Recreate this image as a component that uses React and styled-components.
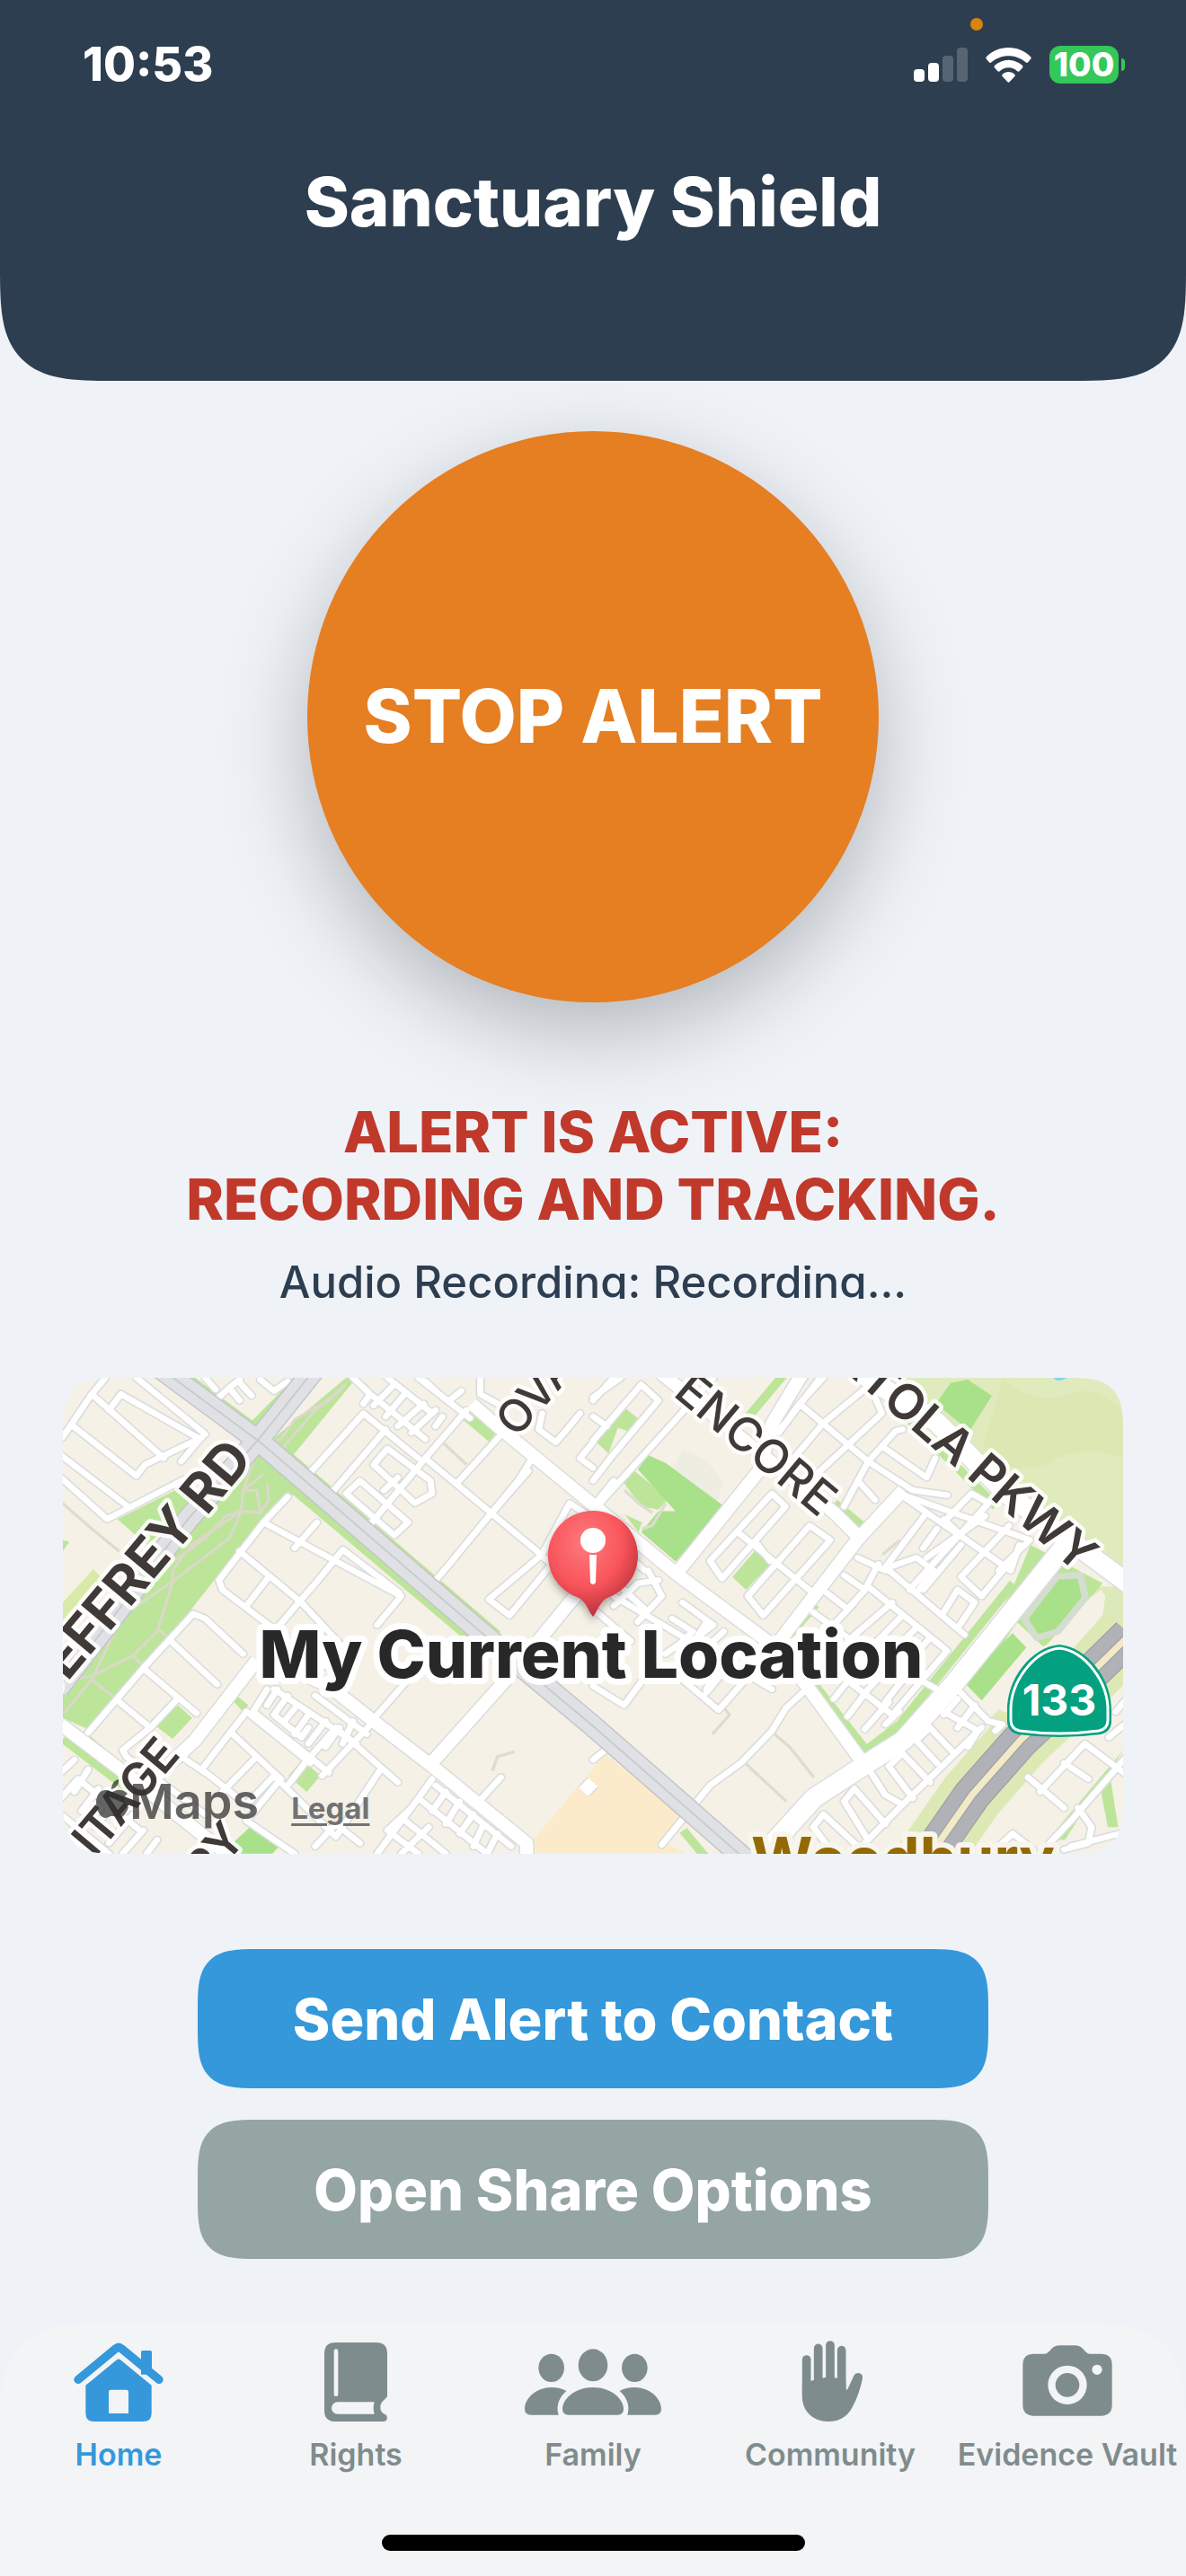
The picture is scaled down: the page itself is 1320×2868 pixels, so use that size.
import { useState } from "react"
import styled, { createGlobalStyle, css } from "styled-components"

const navy = "#2d3e50"
const page = "#eff3f8"
const bar = "#f3f4f6"
const blue = "#3498db"
const gray = "#95a5a4"
const muted = "#7f8c8d"

const GlobalStyle = createGlobalStyle`
    * {
        box-sizing: border-box;
    }
    body {
        margin: 0;
        background-color: ${page};
        font-family: Inter, "Liberation Sans", sans-serif;
    }
`

// smooth corners where the browser knows them, plain round ones elsewhere
const smooth = (top, bottom, round, soft) => css`
    border-radius: ${top * round}px ${top * round}px ${bottom * round}px ${bottom * round}px;

    @supports (corner-shape: squircle) {
        border-radius: ${top * soft}px ${top * soft}px ${bottom * soft}px ${bottom * soft}px;
        corner-shape: superellipse(1.7);
    }
`

const Screen = styled.div`
    min-height: 100vh;
    display: flex;
    flex-direction: column;
`
const Header = styled.header`
    background-color: ${navy};
    color: white;
    padding: 20px 0 152px;
    ${smooth(0, 1, 90, 126)}
`
const PrivacyRow = styled.div`
    height: 14px;
    padding-right: 226px;
    display: flex;
    justify-content: flex-end;
`
const PrivacyDot = styled.span`
    width: 14px;
    height: 14px;
    border-radius: 50%;
    background-color: #d6850e;
`
const StatusRow = styled.div`
    height: 76px;
    padding: 0 68px 0 92px;
    display: flex;
    justify-content: space-between;
    align-items: center;
`
const Time = styled.time`
    font-size: 52px;
    line-height: 60px;
    font-weight: 800;
`
const StatusIcons = styled.div`
    display: flex;
    align-items: center;
    gap: 20px;
`
const Battery = styled.span`
    display: flex;
    align-items: center;
    gap: 3px;
`
const BatteryBody = styled.span`
    width: 77px;
    height: 42px;
    border-radius: 12px;
    background-color: #34c759;
    font-size: 37px;
    line-height: 42px;
    font-weight: 800;
    text-align: center;
`
const BatteryNub = styled.span`
    width: 4px;
    height: 14px;
    border-radius: 0 8px 8px 0;
    background-color: #34c759;
`
const Title = styled.h1`
    margin: 66px 0 0;
    font-size: 76px;
    line-height: 96px;
    font-weight: 800;
    text-align: center;
`
const Main = styled.main`
    flex: 1;
    padding: 56px 70px 70px;
    display: flex;
    flex-direction: column;
    align-items: center;
`
const AlertButton = styled.button`
    width: 636px;
    max-width: 100%;
    aspect-ratio: 1;
    border: none;
    border-radius: 50%;
    background-color: #e67e22;
    box-shadow: 0 32px 96px rgba(0, 0, 0, 0.25);
    color: white;
    font: inherit;
    font-size: 82px;
    line-height: 100px;
    font-weight: 800;
    cursor: pointer;
`
const AlertText = styled.p`
    margin: 107px 0 0;
    color: #c0392b;
    font-size: 63px;
    line-height: 75px;
    font-weight: 800;
    text-align: center;
`
const AudioText = styled.p`
    margin: 36px 0 0;
    color: ${navy};
    font-size: 49px;
    line-height: 37px;
    font-weight: 500;
    text-align: center;
    overflow: hidden;
`
const MapCard = styled.section`
    width: 100%;
    height: 530px;
    margin-top: 88px;
    position: relative;
    overflow: hidden;
    background-color: #f5f1e6;
    ${smooth(1, 1, 45, 64)}
`
const MapCanvas = styled.svg`
    display: block;
    width: 100%;
    height: 100%;
`
const Attribution = styled.div`
    position: absolute;
    left: 36px;
    bottom: 21px;
    display: flex;
    align-items: baseline;
    color: rgba(50, 50, 50, 0.75);
    font-size: 54px;
    line-height: 60px;
    font-weight: 600;
`
const Legal = styled.a`
    margin-left: 36px;
    color: #727272;
    font-size: 33px;
    font-weight: 700;
    text-decoration-thickness: 3px;
    text-underline-offset: 5px;
`
const Actions = styled.div`
    width: 880px;
    max-width: 100%;
    margin-top: 106px;
    display: flex;
    flex-direction: column;
    gap: 35px;
`
const Action = styled.button`
    height: 155px;
    border: none;
    background-color: ${props => props.$color};
    color: white;
    font: inherit;
    font-size: 63px;
    font-weight: 800;
    cursor: pointer;
    ${smooth(1, 1, 48, 68)}
`
const TabBar = styled.nav`
    padding: 19px 0 28px;
    background-color: ${bar};
    ${smooth(1, 0, 90, 126)}
`
const TabList = styled.div`
    display: grid;
    grid-template-columns: repeat(5, 1fr);
`
const Tab = styled.a`
    display: flex;
    flex-direction: column;
    align-items: center;
    gap: 17px;
    color: ${props => props.$active ? blue : muted};
    font-size: 34px;
    line-height: 40px;
    font-weight: 600;
    text-decoration: none;
    white-space: nowrap;
`
const TabIcon = styled.svg`
    width: 152px;
    height: 90px;
    fill: currentColor;
    stroke: none;
`
const HomeIndicator = styled.div`
    width: 471px;
    height: 18px;
    margin: 69px auto 0;
    border-radius: 9px;
    background-color: black;
`

const SignalIcon = () => (
    <svg width="60" height="38" viewBox="0 0 60 38" fill="white" aria-hidden="true">
        <rect x="0" y="24" width="12" height="14" rx="4" />
        <rect x="16" y="17" width="12" height="21" rx="4" />
        <rect x="32" y="9" width="12" height="29" rx="4" opacity=".2" />
        <rect x="48" y="0" width="12" height="38" rx="4" opacity=".2" />
    </svg>
)

const WifiIcon = () => (
    <svg width="51" height="39" viewBox="0 0 152 117" fill="white" aria-hidden="true">
        <path d="M76 0C47 0 20 12 2 31q-3 4 0 7l9 11q4 4 8 0C34 36 54 28 76 28s42 8 57 21q4 4 8 0l9-11q3-3 0-7C132 12 105 0 76 0Z" />
        <path d="M76 41c-17 0-33 7-46 18q-4 4-1 8l10 11q4 4 8 1c8-8 18-12 29-12s21 4 29 12q4 3 8-1l10-11q3-4-1-8C109 48 93 41 76 41Z" />
        <path d="M76 81c-8 0-15 3-20 8q-4 4 0 8l16 17q4 4 8 0l16-17q4-4 0-8c-5-5-12-8-20-8Z" />
    </svg>
)

const HomeIcon = () => (
    <TabIcon viewBox="-16 49 456 270" aria-hidden="true">
        <path d="M287 87q0-5 5-5h26q5 0 5 5v75h-36Z" />
        <path d="M77 179 203 75q9-8 18 0l126 104" fill="none" stroke="currentColor" strokeWidth="28" strokeLinecap="round" />
        <path fillRule="evenodd" d="M102 198 206 113q6-5 12 0L322 198V291q0 28-28 28H130q-28 0-28-28ZM179 220V292H245V220q0-7-7-7H186q-7 0-7 7Z" />
    </TabIcon>
)

const BookIcon = () => (
    <TabIcon viewBox="778 49 456 270" aria-hidden="true">
        <path fillRule="evenodd" d="M938 55H1074q37 0 37 37V236C1100 250 1088 254 1088 272S1100 292 1109 299Q1115 318 1098 319H938q-37 0-37-37V92q0-37 37-37ZM933 84V228a7 7 0 0 0 14 0V84a7 7 0 0 0-14 0ZM945 254a20 20 0 0 0 0 40H1068q-6-20 0-40Z" />
    </TabIcon>
)

const FamilyIcon = () => (
    <TabIcon viewBox="39 49 456 270" aria-hidden="true">
        <ellipse cx="128" cy="140" rx="43" ry="47" />
        <ellipse cx="267" cy="131" rx="49" ry="54" />
        <ellipse cx="406" cy="140" rx="43" ry="47" />
        <path d="M186 297q-21 0-21-20C165 245 205 205 267 205S369 245 369 277q0 20-21 20Z" />
        <path d="M60 297q-21 0-21-20C39 240 80 205 128 205c20 0 37 4 50 12C155 238 142 265 152 297Z" />
        <path d="M474 297q21 0 21-20C495 240 454 205 406 205c-20 0-37 4-50 12C379 238 392 265 382 297Z" />
    </TabIcon>
)

const HandIcon = () => (
    <TabIcon viewBox="834 49 456 270" aria-hidden="true">
        <path d="M983 112V230M1022 74V230M1062 64V230M1100 81V240" fill="none" stroke="currentColor" strokeWidth="29" strokeLinecap="round" />
        <path d="M968.500 190 998 185Q1002 180 1008 181V174Q1030 168 1036 174L1047 171Q1062 168 1077 174 1081 171 1086 175L1114.500 190V210q2 5 6 0L1141 166C1150 150 1173 158 1170 174 1166 196 1157 226 1145 253 1125 299 1100 319 1055 319 1005 319 968.500 285 968.500 235Z" />
    </TabIcon>
)

const CameraIcon = () => (
    <TabIcon viewBox="185 49 456 270" aria-hidden="true">
        <path fillRule="evenodd" d="M301 93H338C354 93 358 65 385 65H440C467 65 471 93 487 93H525q37 0 37 37V263q0 37-37 37H301q-37 0-37-37V130q0-37 37-37ZM348 197a65 65 0 0 0 130 0 65 65 0 0 0-130 0ZM495 146a17 17 0 0 0 34 0 17 17 0 0 0-34 0Z" />
        <circle cx="413" cy="197" r="40" />
    </TabIcon>
)

const AppleIcon = () => (
    <svg width="38" height="44" viewBox="0 0 38 44" fill="currentColor" aria-hidden="true">
        <path d="M26 0c1 5-3 10-8 11 0-5 3-10 8-11ZM19 14c2 0 5-3 9-2 3 0 6 2 8 4-6 4-5 12 1 15-2 6-6 12-10 12-3 0-4-2-8-2s-5 2-8 2C6 43 1 34 1 26c0-9 5-14 10-14 4 0 6 2 8 2Z" />
    </svg>
)

const tabs = [
    { id: "home", name: "Home", Icon: HomeIcon },
    { id: "rights", name: "Rights", Icon: BookIcon },
    { id: "family", name: "Family", Icon: FamilyIcon },
    { id: "community", name: "Community", Icon: HandIcon },
    { id: "vault", name: "Evidence Vault", Icon: CameraIcon },
]

// street geometry: west and east sheets share one grid, the east one starts at x = 1568
const westStreets = [
    "M25 225 110 90 150 39M110 90 320 290M160 140 195 90 425 230M50 185 240 345M20 280 215 440M20 350 155 480 380 355M240 345 265 310 430 225M240 39 440 215M425 230 370 300",
    "M440 39 470 75M480 100 510 70 540 110M510 70 540 45M545 60 575 95M600 45 640 80 680 50",
    "M745 335 900 150 1060 290M810 395 965 200M970 260 930 310 1050 430 1100 400 1095 360 970 260M890 360 850 400 990 530 1030 490 890 360M925 490 1080 290 1200 140M960 390 1000 350",
    "M870 39 920 90 900 120M920 90 1080 230M930 125 990 60M965 160 1020 90M1000 190 1075 120M1040 210 1110 140M1060 39 1210 165M1080 50 1120 90M1110 190 1130 160M970 39 1100 150M1150 110 1185 80",
    "M1170 370 1310 205M1170 370 1400 575 1568 740M1080 290 1170 370M1110 670 1150 620 1350 360 1385 300M1270 465 1380 330",
    "M1420 590 1500 430 1568 480M1420 590 1265 730 1325 780 1440 630M1240 39 1240 90 1290 120M1420 150 1410 200 1460 240 1500 190 1530 150M1568 240 1530 290 1568 320",
    "M680 410 610 490 480 670 490 700 650 830M610 490 1010 720 940 810M540 580 720 740M700 570 765 490M780 655 840 575 1005 710M780 655 640 830M560 750 625 660M850 890 720 740M640 830 850 980",
    "M100 1145 260 945 405 775 440 790 550 900M340 860 475 995M260 945 415 1085M190 1050 280 1130M280 1130 200 1200 210 1220 440 1400M280 1130 360 1040M370 1220 440 1270",
    "M560 1080 430 1260M560 1080 745 1240M620 1010 580 1080 800 1270M520 1150 660 1290M430 1260 560 1370 640 1280 820 1470M590 1220 490 1330M660 1290 560 1420 700 1523M680 1310 730 1240 820 1130 1000 1300M930 1110 780 1280M820 1470 950 1260M760 1500 820 1430 890 1490",
    "M650 1010 620 1060M680 1030 640 1090 720 1160 740 1130M700 1070 670 1110M740 1090 700 1150M790 1110 740 1180M830 1130 790 1190M870 1110 840 1180M640 1010 880 1180M760 1030 910 1150",
    "M940 1090 1030 980M1240 1355 1300 1285M1100 1290 1060 1350 940 1523M1060 1350 1260 1523M1110 1310 1330 1500M1140 1330 1100 1390M1180 1360 1140 1430M1220 1400 1180 1460M1250 1430 1220 1500M1290 1460 1260 1523M1010 1410 1140 1523M1040 1380 970 1450 1060 1523M1090 1440 1010 1523",
    "M20 1270 60 1230M20 1350 70 1290 250 1450M60 1330 100 1260M130 1320 80 1390M20 1400 160 1523M180 1360 120 1440M230 1400 160 1490M260 1450 200 1523M300 1480 270 1523M1560 540 1500 600",
]
const eastStreets = [
    "M0 360 50 290 190 110 140 60 0 235M0 110 60 39M0 160 40 190M20 430 240 170 350 39M80 39 0 100M0 440 60 360",
    "M540 210 660 39M530 210 560 180 600 120 800 300 930 390 1030 405M600 120 670 39M670 180 830 39M740 250 840 150 820 100M670 180 560 320M800 300 880 205 900 200M850 260 970 350 995 290M800 300 730 440M770 360 820 420M650 340 740 250",
    "M520 400 340 610 375 665 560 440ZM420 520 640 710M630 500 450 720 495 780 690 545ZM480 560 515 610",
    "M890 400 1270 545 1180 640M890 400 1215 640 1240 560M1020 490 1100 400 1150 430 920 700M970 460 850 630 1080 840M1080 540 1020 480M960 570 1000 510M970 600 1140 470M1070 660 1210 500M1070 660 1130 720 1230 590M1070 560 960 700M860 630 940 600 990 640 940 710M1020 770 1060 700 1110 740 1060 820",
    "M770 600 850 640M730 655 790 700 830 620M680 710 740 760 800 690M640 770 780 880 1000 1010M690 820 760 740M800 690 1030 890 870 1090 700 950M740 860 870 740M790 900 900 780M830 930 940 820M880 970 980 850M850 1050 930 940M800 1010 880 920M790 1135 860 1050M740 1095 800 1010M700 1040 760 960M890 1080 850 1120",
    "M60 750 130 680 190 670M90 700 150 760M130 800 200 720 160 640M0 760 110 860M60 720 520 1010M150 640 110 600M230 790 290 830 240 880M260 740 350 810 300 850M330 800 290 870M340 870 380 830M210 900 250 870M330 1020 430 890M0 1000 90 1060 180 930M260 980 365 1075 460 960M360 950 330 1010",
    "M620 1010 560 1070 520 1140 430 1240 340 1310 200 1495M0 1230 35 1200M790 1240 850 1340 900 1370 1130 1130M860 1250 930 1350M860 1250 900 1210 980 1300M950 1160 980 1130 1050 1210M1020 1090 1060 1040M1020 1080 1120 1140 1090 1190M1060 1130 1110 1060M730 1360 760 1320 850 1430M730 1360 800 1480M640 1440 670 1400 770 1500M900 1370 760 1523M640 1440 700 1523M1000 1240 940 1170",
    "M1050 1000 1150 1110 1190 1120 1170 1140M1265 1285 1370 1380M1300 1330 1430 1180 1568 1290M1370 1240 1440 1290M1568 1200 1390 1420 1310 1510M1410 1380 1450 1440 1440 1490 1370 1510M1568 1450 1390 1500M1568 1020 1520 1080M1568 1100 1500 1160M1170 1510 1220 1460 1280 1510",
]
const avenues = [
    "M280 1300 410 1170 590 920M690 950 800 1000 930 1110 1100 1250 1375 1490V1540M1090 1250 1340 950 1500 740 1568 660M1215 120 1290 190 1568 435 1810 650 2100 880 2190 1000 2360 1250M1540 1330 1568 1300",
    "M2180 20 2090 180 2050 330 1810 650M2470 390 2340 540 2210 720 2110 860M1760 20 2270 460 2345 540M20 1120 230 1290 500 1523",
]
const arterials = "M2950 550 2620 990 2470 1170 2360 1245 2210 1350 2100 1480 2070 1540M2340 20 2570 180 2770 400 3136 690"
const trunk = "M310 10 600 240 1250 840 1568 1125 1840 1380 2010 1540M760 10 600 225 390 480 190 760 10 1010"
const freeway = "M3130 840 2930 1050 2810 1170 2670 1340 2540 1540"
const verges = "M390 39 610 215 1290 840M600 300 1230 870M2200 980 2362 1200 2460 1120 2790 680M2020 160 2130 20M2140 840 2215 745M2270 430 2350 500M2350 20 2740 440M26 1165 240 1340M1830 1450 1900 1540"
const footpaths = "M840 70 800 110 760 130 700 170 660 230 620 245M850 60 760 140 655 270M580 300 550 390 545 455 400 560 345 640 345 680 300 830 230 905 120 965 20 990M545 455 500 470 440 540 350 610M610 340 550 390 590 390 600 460 545 455M620 370 625 420 600 460M510 540 350 670 200 780 110 980 30 1085M510 540 545 455M110 980 180 1040M230 905 260 940M305 825 335 850"
const trails = "M25 430 110 510 190 580M1130 240 1200 310M1660 390 1700 430 1740 460M1780 430 1740 500 1710 510M1950 1070 1965 1090 1915 1150M2090 1145 2140 1190 2210 1285M2010 1240 2130 1360M2410 590 2460 545M1275 1265 1290 1220 1340 1205"

const parks = [
    "M850 39 880 39 685 295 700 400 600 490 400 760 110 1140 26 1100V1000L190 770 545 330 620 245Z",
    "M185 480 370 380 440 400 270 560Z",
    "M390 39 565 185 700 39H720L590 200 380 39Z",
    "M345 1045 402 1100 345 1165 285 1115Z",
    "M722 1230 775 1280 735 1330 682 1280Z",
    "M1215 135 1290 205 1265 238 1190 170Z",
    "M520 1020 565 1060 550 1080 510 1035Z",
    "M1663 135 1698 165 1668 205 1640 195 1613 275 1578 240Z",
    "M1688 330 1788 415 1758 450 1708 440 1656 365ZM1660 465 1710 490 1700 520Z",
    "M2038 580 2083 620 2013 700 1973 660Z",
    "M26 545 45 550 26 580ZM100 1150 180 1225 220 1260 190 1300 26 1170 60 1130Z",
    "M2840 560 3050 680 3000 740 2880 880 2800 800 2700 980 2640 1000 2790 690Z",
    "M3070 1270 3095 1440 3065 1440 3040 1300ZM3110 1200 2940 1480 2890 1480Z",
]
const lawns = [
    "M1728 280 1780 305 1943 435 1888 515 1808 455 1698 325Z",
    "M1758 455H1820L1888 515 1808 612 1708 520Z",
    "M2608 55 2658 45 2728 95 2663 205 2565 120Z",
    "M580 1430 655 1500 635 1523H540L510 1500Z",
]

const labels = [
    { text: "JEFFREY RD", x: 213, y: 91, turn: -50, size: 60, weight: 700, anchor: "end" },
    { text: "HERITAGE", x: 132, y: 420, turn: -50, size: 52, weight: 600, anchor: "end" },
    { text: "RY", x: 205, y: 514, turn: -50, size: 52, weight: 600, anchor: "end" },
    { text: "OVAL", x: 505, y: 68, turn: -49, size: 50, weight: 500, anchor: "start" },
    { text: "ENCORE", x: 678, y: 19, turn: 40, size: 52, weight: 500, anchor: "start" },
    { text: "PORTOLA PKWY", x: 1130, y: 219, turn: 41, size: 54, weight: 600, anchor: "end" },
]

const Streets = ({ color, width, shift }) => (
    <g fill="none" stroke={color} strokeWidth={width} strokeLinecap="round" strokeLinejoin="round" transform={shift}>
        {(shift ? eastStreets : westStreets).map((d) => <path key={d} d={d} />)}
    </g>
)

const StreetMap = () => (
    <MapCanvas viewBox="0 0 1180 530" preserveAspectRatio="xMidYMid slice" role="img" aria-label="Map of my current location">
        <defs>
            <radialGradient id="pin" cx=".42" cy=".3" r=".75">
                <stop offset="0" stopColor="#ff7a7e" />
                <stop offset=".55" stopColor="#f8555b" />
                <stop offset="1" stopColor="#b02a35" />
            </radialGradient>
            <filter id="pinShadow" x="-50%" y="-50%" width="200%" height="200%">
                <feDropShadow dx="0" dy="4" stdDeviation="5" floodOpacity=".35" />
            </filter>
        </defs>

        <g transform="translate(-10 -14) scale(.3827 .3571)">
            <path d="M2430 20H3136V700L2950 560 2770 370 2570 170Z" fill="#dfebbd" />
            <path d="M2760 39Q2850 130 2950 90T3136 180V300Q3000 240 2900 300T2700 260Z" fill="#d8e7b0" opacity=".7" />
            <path d="M2908 36H2950Q2930 54 2910 44Z" fill="#7fd3f5" />
            <path d="M115 635 140 665 26 800V740Z" fill="#d9e9a8" />
            <path d="M1830 260 1900 300 1945 360 1930 430 1800 320Z" fill="#edede2" />
            <path d="M1390 1540V1485L1603 1212 1850 1420 1770 1480 1860 1540Z" fill="#fcebcb" />
            <path d="M3136 690 2980 690 3040 740 2990 850 2700 1120 2860 1120 3136 850Z" fill="#dce9b8" />
            <path d={freeway} fill="none" stroke="#dce9b4" strokeWidth="190" />
            <g fill="#bce599">{parks.map((d) => <path key={d} d={d} />)}</g>
            <g fill="#a9e08a">{lawns.map((d) => <path key={d} d={d} />)}</g>
            <path d="M3045 700 3058 720 3050 780 2950 900 2860 1100 2760 1080 2700 1040 2828 880 2785 800 2870 880 2910 860 3010 730Z" fill="#f5f1e6" />
            <path d="M2788 835 2828 880 2698 1045 2648 990Z" fill="#a9e08a" />
            <path d="M2918 658 2985 655 3000 725 2920 830 2858 850 2822 790Z" fill="#a9e08a" stroke="#d3ded0" strokeWidth="20" strokeLinejoin="round" />
            <path d={verges} fill="none" stroke="#bce599" strokeWidth="26" />
            <path d={footpaths} fill="none" stroke="#dcd8cc" strokeWidth="8" strokeLinejoin="round" />
            <path d={trails} fill="none" stroke="#dddccf" strokeWidth="9" strokeLinejoin="round" />

            <Streets color="#dbdddd" width="27" />
            <Streets color="#dbdddd" width="27" shift="translate(1568 0)" />
            <g fill="none" stroke="#dbdddd" strokeLinejoin="round">
                {avenues.map((d) => <path key={d} d={d} strokeWidth="46" />)}
                <path d={arterials} strokeWidth="66" />
            </g>
            <Streets color="#fff" width="18" />
            <Streets color="#fff" width="18" shift="translate(1568 0)" />
            <g fill="none" stroke="#fff" strokeLinejoin="round">
                {avenues.map((d) => <path key={d} d={d} strokeWidth="38" />)}
                <path d={arterials} strokeWidth="58" />
            </g>

            <g fill="none" strokeLinejoin="round">
                <path d={trunk} stroke="#c3c5c9" strokeWidth="68" />
                <path d={trunk} stroke="#e0e1e5" strokeWidth="60" />
                <path d={trunk} stroke="#c8cacf" strokeWidth="5" />
                <path d={freeway} stroke="#9d9ea4" strokeWidth="112" />
                <path d={freeway} stroke="#b1b2b8" strokeWidth="106" />
                <path d={freeway} stroke="#9d9ea4" strokeWidth="26" />
                <path d={freeway} stroke="#f2eac6" strokeWidth="20" />
            </g>
        </g>

        <g fill="#3f3a37" stroke="#fff" strokeOpacity=".85" strokeWidth="9" strokeLinejoin="round" paintOrder="stroke">
            {labels.map((item) => (
                <text
                    key={item.text}
                    transform={`translate(${item.x} ${item.y}) rotate(${item.turn})`}
                    fontSize={item.size}
                    fontWeight={item.weight}
                    textAnchor={item.anchor}
                >
                    {item.text}
                </text>
            ))}
        </g>
        <text x="935" y="559" fontSize="66" fontWeight="700" textAnchor="middle" fill="#946a00" stroke="#f8f5ec" strokeWidth="12" strokeLinejoin="round" paintOrder="stroke">Woodbury</text>

        <path d="M1109 297C1140 300 1168 335 1167 372V382Q1167 394 1155 397 1109 403 1063 397 1051 394 1051 382V372C1050 335 1078 300 1109 297Z" fill="#04a181" />
        <path d="M1109 301C1137 304 1164 338 1163 372V381Q1163 391 1153 393 1109 399 1065 393 1055 391 1055 381V372C1054 338 1081 304 1109 301Z" fill="none" stroke="#fff" strokeWidth="3" />
        <text x="1109" y="376" fontSize="48" fontWeight="700" textAnchor="middle" fill="#fff">133</text>

        <text x="588" y="334" fontSize="73" fontWeight="800" textAnchor="middle" fill="#282828" stroke="#fff" strokeWidth="14" strokeLinejoin="round" paintOrder="stroke">My Current Location</text>

        <path d="M590 148C618 148 640 170 640 198 640 221 625 238 606 245 597 250 595 260 590 266 585 260 583 250 574 245 555 238 540 221 540 198 540 170 562 148 590 148Z" fill="url(#pin)" filter="url(#pinShadow)" />
        <circle cx="590" cy="181" r="14" fill="#fff" />
        <path d="M586 197H594L593 228Q590 232 587 228Z" fill="#fff" />
    </MapCanvas>
)

const App = () => {
    const [tab, setTab] = useState("home")

    return (
        <>
            <GlobalStyle />
            <Screen>
                <Header>
                    <PrivacyRow><PrivacyDot /></PrivacyRow>
                    <StatusRow>
                        <Time>10:53</Time>
                        <StatusIcons>
                            <SignalIcon />
                            <WifiIcon />
                            <Battery>
                                <BatteryBody>100</BatteryBody>
                                <BatteryNub />
                            </Battery>
                        </StatusIcons>
                    </StatusRow>
                    <Title>Sanctuary Shield</Title>
                </Header>
                <Main>
                    <AlertButton type="button">STOP ALERT</AlertButton>
                    <AlertText>ALERT IS ACTIVE:<br />RECORDING AND TRACKING.</AlertText>
                    <AudioText>Audio Recording: Recording...</AudioText>
                    <MapCard>
                        <StreetMap />
                        <Attribution>
                            <AppleIcon />
                            Maps
                            <Legal href="#legal">Legal</Legal>
                        </Attribution>
                    </MapCard>
                    <Actions>
                        <Action type="button" $color={blue}>Send Alert to Contact</Action>
                        <Action type="button" $color={gray}>Open Share Options</Action>
                    </Actions>
                </Main>
                <TabBar>
                    <TabList>
                        {tabs.map(({ id, name, Icon }) => (
                            <Tab key={id} href={`#${id}`} $active={tab === id} onClick={() => setTab(id)}>
                                <Icon />
                                {name}
                            </Tab>
                        ))}
                    </TabList>
                    <HomeIndicator />
                </TabBar>
            </Screen>
        </>
    )
}

export default App
